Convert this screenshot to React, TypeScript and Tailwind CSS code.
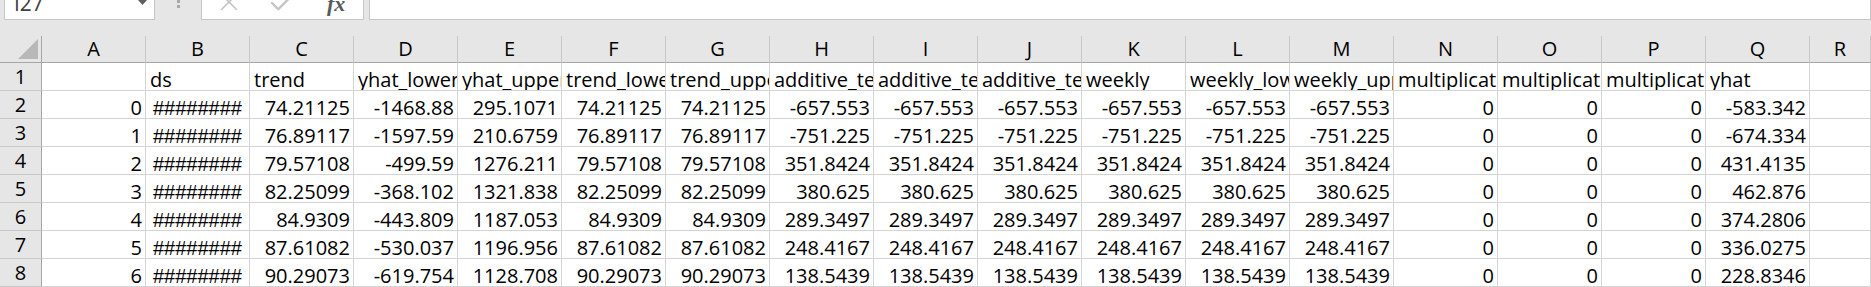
import { Check, X } from "lucide-react";

type Kind = "num" | "text" | "hash" | "empty";

const COLS = "ABCDEFGHIJKLMNOPQR".split("");

const HEADINGS = [
  "",
  "ds",
  "trend",
  "yhat_lower",
  "yhat_upper",
  "trend_lower",
  "trend_upper",
  "additive_terms",
  "additive_terms_lower",
  "additive_terms_upper",
  "weekly",
  "weekly_lower",
  "weekly_upper",
  "multiplicative_terms",
  "multiplicative_terms_lower",
  "multiplicative_terms_upper",
  "yhat",
  "",
];

// idx, trend, yhat_lower, yhat_upper, additive/weekly, yhat
const DATA: [string, string, string, string, string, string][] = [
  ["0", "74.21125", "-1468.88", "295.1071", "-657.553", "-583.342"],
  ["1", "76.89117", "-1597.59", "210.6759", "-751.225", "-674.334"],
  ["2", "79.57108", "-499.59", "1276.211", "351.8424", "431.4135"],
  ["3", "82.25099", "-368.102", "1321.838", "380.625", "462.876"],
  ["4", "84.9309", "-443.809", "1187.053", "289.3497", "374.2806"],
  ["5", "87.61082", "-530.037", "1196.956", "248.4167", "336.0275"],
  ["6", "90.29073", "-619.754", "1128.708", "138.5439", "228.8346"],
];

function Cell({ value, kind }: { value: string; kind: Kind }) {
  const align =
    kind === "num"
      ? "justify-end pr-[3px]"
      : kind === "hash"
        ? "justify-center font-['Liberation_Sans',sans-serif]"
        : "justify-start pl-[4px]";
  return (
    <div
      className={`h-[28px] bg-white border-r border-b border-[#d4d4d4] flex items-end overflow-hidden whitespace-nowrap text-[20px] leading-[20px] text-black ${align}`}
    >
      {value}
    </div>
  );
}

function RowHead({ n }: { n: number }) {
  return (
    <div className="h-[28px] bg-[#e6e6e6] border-r border-r-[#a6a6a6] border-b border-b-[#c8c8c8] flex items-center justify-center text-[20px] text-black">
      {n}
    </div>
  );
}

export default function App() {
  return (
    <div className="w-[1871px] h-[287px] overflow-hidden bg-[#e6e6e6] font-['Open_Sans',sans-serif]">
      {/* ── formula bar (top cut off) ── */}
      <div className="h-[20px] flex items-end overflow-hidden">
        <div className="ml-[4px] w-[151px] h-[34px] flex-shrink-0 bg-white border border-[#c6c6c6] flex items-center pl-[9px] pr-[7px]">
          <span className="text-[21px] leading-[21px] text-[#404040]">I27</span>
          <svg width="9" height="6" viewBox="0 0 9 6" className="ml-auto">
            <path d="M0 0h9L4.5 5z" fill="#5f5f5f" />
          </svg>
        </div>
        <div className="w-[46px] h-[20px] flex-shrink-0 flex flex-col items-center justify-end gap-[2px] pb-[12px]">
          <div className="w-[3px] h-[3px] bg-[#a8a8a8]" />
          <div className="w-[3px] h-[3px] bg-[#a8a8a8]" />
        </div>
        <div className="w-[163px] h-[34px] flex-shrink-0 bg-white border border-[#c6c6c6] grid grid-cols-3 items-center justify-items-center">
          <X size={30} strokeWidth={1.3} color="#c4c4c4" className="mb-[3px]" />
          <Check size={30} strokeWidth={1.9} color="#c4c4c4" className="mb-[2px]" />
          <span className="font-['Liberation_Serif',serif] italic font-bold text-[22px] leading-[20px] text-[#5a5a5a]">
            fx
          </span>
        </div>
        <div className="ml-[5px] flex-1 h-[34px] bg-white border border-[#c6c6c6]" />
      </div>

      <div className="h-[16px]" />

      {/* ── sheet grid ── */}
      <div className="grid grid-cols-[42px_repeat(17,104px)_1fr]">
        {/* column headings */}
        <div className="h-[27px] bg-[#e6e6e6] border-r border-r-[#a6a6a6] border-b border-b-[#a6a6a6] flex items-end justify-end pr-[3px] pb-[3px]">
          <svg width="20" height="20" viewBox="0 0 20 20">
            <path d="M20 0V20H0z" fill="#b8b8b8" />
          </svg>
        </div>
        {COLS.map((c) => (
          <div
            key={c}
            className="h-[27px] bg-[#e6e6e6] border-r border-r-[#c8c8c8] border-b border-b-[#a6a6a6] flex items-center justify-center text-[20px] text-black"
          >
            {c}
          </div>
        ))}

        {/* row 1: field names */}
        <RowHead n={1} />
        {HEADINGS.map((h, i) => (
          <Cell key={i} value={h} kind={h ? "text" : "empty"} />
        ))}

        {/* rows 2-8 */}
        {DATA.map(([idx, trend, lo, hi, add, yhat], r) => {
          const cells: [string, Kind][] = [
            [idx, "num"],
            ["########", "hash"],
            [trend, "num"],
            [lo, "num"],
            [hi, "num"],
            [trend, "num"],
            [trend, "num"],
            [add, "num"],
            [add, "num"],
            [add, "num"],
            [add, "num"],
            [add, "num"],
            [add, "num"],
            ["0", "num"],
            ["0", "num"],
            ["0", "num"],
            [yhat, "num"],
            ["", "empty"],
          ];
          return [
            <RowHead key={`h${r}`} n={r + 2} />,
            ...cells.map(([v, k], i) => <Cell key={`${r}-${i}`} value={v} kind={k} />),
          ];
        })}
      </div>
    </div>
  );
}
